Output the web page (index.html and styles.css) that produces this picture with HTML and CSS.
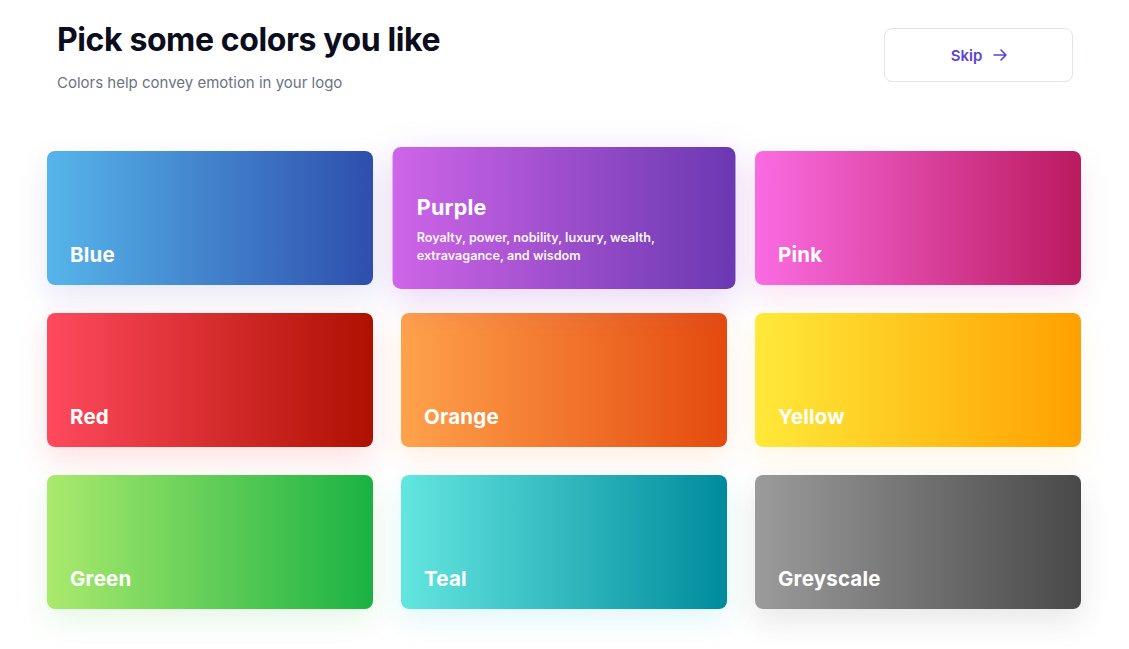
FILE: index.html
```html
<!doctype html>
<html lang="en">
  <head>
    <meta charset="utf-8" />
    <title>Pick some colors you like</title>
    <link rel="stylesheet" href="styles.css">
  </head>
  <body>
    <div class="header">
      <div>
        <h1 class="title">Pick some colors you like</h1>
        <p class="subtitle">Colors help convey emotion in your logo</p>
      </div>
      <button class="skip">
        Skip
        <svg width="16" height="16" viewBox="0 0 16 16" fill="none" stroke="currentColor" stroke-width="1.6" stroke-linecap="round" stroke-linejoin="round">
          <path d="M2 8h12M9 3l5 5-5 5"/>
        </svg>
      </button>
    </div>

    <div class="grid">
      <div class="card blue"><div class="name">Blue</div></div>
      <div class="card purple active">
        <div class="name">Purple</div>
        <div class="desc">Royalty, power, nobility, luxury, wealth, extravagance, and wisdom</div>
      </div>
      <div class="card pink"><div class="name">Pink</div></div>
      <div class="card red"><div class="name">Red</div></div>
      <div class="card orange"><div class="name">Orange</div></div>
      <div class="card yellow"><div class="name">Yellow</div></div>
      <div class="card green"><div class="name">Green</div></div>
      <div class="card teal"><div class="name">Teal</div></div>
      <div class="card grey"><div class="name">Greyscale</div></div>
    </div>
  </body>
</html>
```

FILE: styles.css
```css
/* page */
body{
  margin: 0;
  background: #fff;
  font-family: Inter, "Open Sans", sans-serif;
}
/* top bar with title and skip button */
.header{
  display: flex;
  justify-content: space-between;
  align-items: flex-start;
  padding: 18px 56px 0 57px;
}
.title{
  margin: 0;
  font-size: 32px;
  line-height: 44px;
  font-weight: 700;
  color: #0b0d1c;
  letter-spacing: -0.4px;
}
.subtitle{
  margin: 11px 0 0 0;
  font-size: 15px;
  color: #6b7384;
}
.skip{
  margin-top: 10px;
  width: 189px;
  height: 54px;
  display: flex;
  align-items: center;
  justify-content: center;
  gap: 10px;
  border: 1px solid #dfe4ee;
  border-radius: 8px;
  background: #fff;
  color: #5a43d8;
  font-family: Inter, "Open Sans", sans-serif;
  font-size: 15px;
  font-weight: 600;
  padding: 0 0 0 2px;
}
/* colour cards */
.grid{
  display: grid;
  grid-template-columns: repeat(3, 326px);
  grid-auto-rows: 134px;
  gap: 28px;
  padding: 59px 0 60px 47px;
}
.card{
  border-radius: 8px;
  display: flex;
  flex-direction: column;
  justify-content: flex-end;
  padding: 0 23px 18px 23px;
  color: #fff;
}
.name{
  font-size: 20.5px;
  line-height: 24px;
  font-weight: 700;
  letter-spacing: 0.2px;
}
.desc{
  font-size: 12px;
  line-height: 17px;
  font-weight: 600;
  margin: 8px 0 5px 0;
  opacity: 0.95;
  padding-right: 40px;
}
.active{
  transform: scale(1.052, 1.06);
}
.blue{
  background: linear-gradient(90deg, #56b5ea, #2e4fad);
  box-shadow: 0 12px 30px rgba(80, 90, 200, 0.14);
}
.purple{
  background: linear-gradient(90deg, #cf65e8, #6a38b1);
  box-shadow: 0 10px 34px rgba(150, 70, 210, 0.22);
}
.pink{
  background: linear-gradient(90deg, #fb6ce3, #bb1a5e);
  box-shadow: 0 12px 30px rgba(220, 60, 160, 0.14);
}
.red{
  background: linear-gradient(90deg, #ff4a5e, #ae1000);
  box-shadow: 0 12px 30px rgba(240, 60, 60, 0.16);
}
.orange{
  background: linear-gradient(90deg, #ffa24c, #e44a0f);
  box-shadow: 0 12px 30px rgba(250, 140, 60, 0.14);
}
.yellow{
  background: linear-gradient(90deg, #ffe93a, #ffa000);
  box-shadow: 0 12px 30px rgba(250, 200, 60, 0.14);
}
.green{
  background: linear-gradient(90deg, #aaea6d, #1ab243);
  box-shadow: 0 12px 30px rgba(80, 200, 80, 0.14);
}
.teal{
  background: linear-gradient(90deg, #64e6e0, #008b9d);
  box-shadow: 0 12px 30px rgba(40, 200, 210, 0.14);
}
.grey{
  background: linear-gradient(90deg, #9b9b9b, #494949);
  box-shadow: 0 12px 30px rgba(60, 60, 60, 0.12);
}
```
